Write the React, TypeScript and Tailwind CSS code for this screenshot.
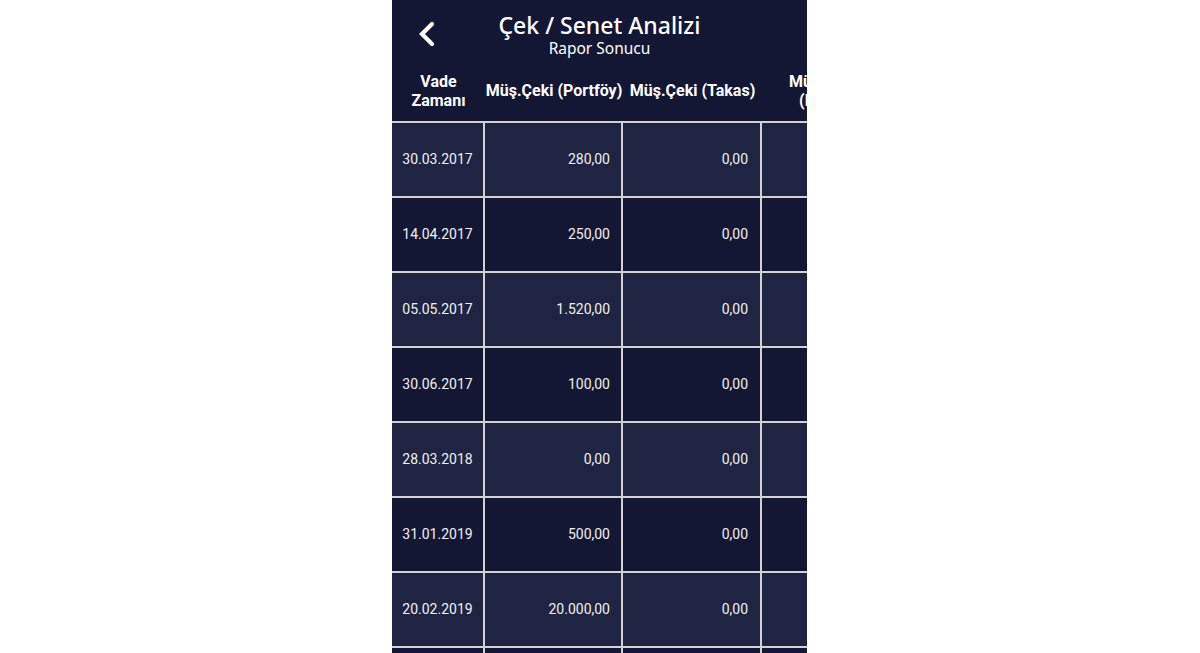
import React from "react";

const rows = [
  ["30.03.2017", "280,00", "0,00"],
  ["14.04.2017", "250,00", "0,00"],
  ["05.05.2017", "1.520,00", "0,00"],
  ["30.06.2017", "100,00", "0,00"],
  ["28.03.2018", "0,00", "0,00"],
  ["31.01.2019", "500,00", "0,00"],
  ["20.02.2019", "20.000,00", "0,00"],
  ["", "", ""],
];

export default function App() {
  return (
    <div className="w-[1200px] h-[653px] bg-white overflow-hidden">
      <div className="ml-[392px] w-[415px] h-[653px] bg-[#141734] overflow-hidden text-white">
        {/* Nav bar */}
        <div className="grid grid-cols-[50px_1fr_50px] h-[66px]">
          <div className="flex pl-[25px] pt-[21px]">
            <svg width="20" height="26" viewBox="0 0 20 26">
              <polyline
                points="15,3 5,13 15,23"
                fill="none"
                stroke="#ffffff"
                strokeWidth="4.2"
                strokeLinecap="round"
                strokeLinejoin="miter"
              />
            </svg>
          </div>
          <div className="flex flex-col items-center pt-[11px] font-['Noto_Sans',sans-serif]">
            <div className="text-[23px] leading-[28px] font-medium">Çek / Senet Analizi</div>
            <div className="text-[15.5px] leading-[19px]">Rapor Sonucu</div>
          </div>
          <div />
        </div>

        {/* Table header */}
        <div className="flex h-[57px] border-b-2 border-[#d2d2d2] font-['Roboto',sans-serif] font-bold text-[16px] leading-[19px] text-center pb-[6px]">
          <div className="w-[93px] shrink-0 flex flex-col items-center justify-center">
            <span>Vade</span>
            <span>Zamanı</span>
          </div>
          <div className="w-[138px] shrink-0 flex items-center justify-center whitespace-nowrap">
            Müş.Çeki (Portföy)
          </div>
          <div className="w-[139px] shrink-0 flex items-center justify-center whitespace-nowrap">
            Müş.Çeki (Takas)
          </div>
          <div className="w-[139px] shrink-0 flex flex-col items-center justify-center whitespace-nowrap">
            <span>Müş.Senedi</span>
            <span>(Portföy)</span>
          </div>
        </div>

        {/* Rows */}
        {rows.map((r, i) => (
          <div
            key={i}
            className={`flex h-[75px] border-b-2 border-[#d2d2d2] font-['Roboto',sans-serif] text-[14px] text-[#f0f0f0] ${
              i % 2 === 0 ? "bg-[#1e2441]" : "bg-[#141734]"
            }`}
          >
            <div className="w-[93px] shrink-0 border-r-2 border-[#d2d2d2] flex items-center justify-center">
              {r[0]}
            </div>
            <div className="w-[138px] shrink-0 border-r-2 border-[#d2d2d2] flex items-center justify-end pr-[11px]">
              {r[1]}
            </div>
            <div className="w-[139px] shrink-0 border-r-2 border-[#d2d2d2] flex items-center justify-end pr-[12px]">
              {r[2]}
            </div>
            <div className="w-[139px] shrink-0" />
          </div>
        ))}
      </div>
    </div>
  );
}
